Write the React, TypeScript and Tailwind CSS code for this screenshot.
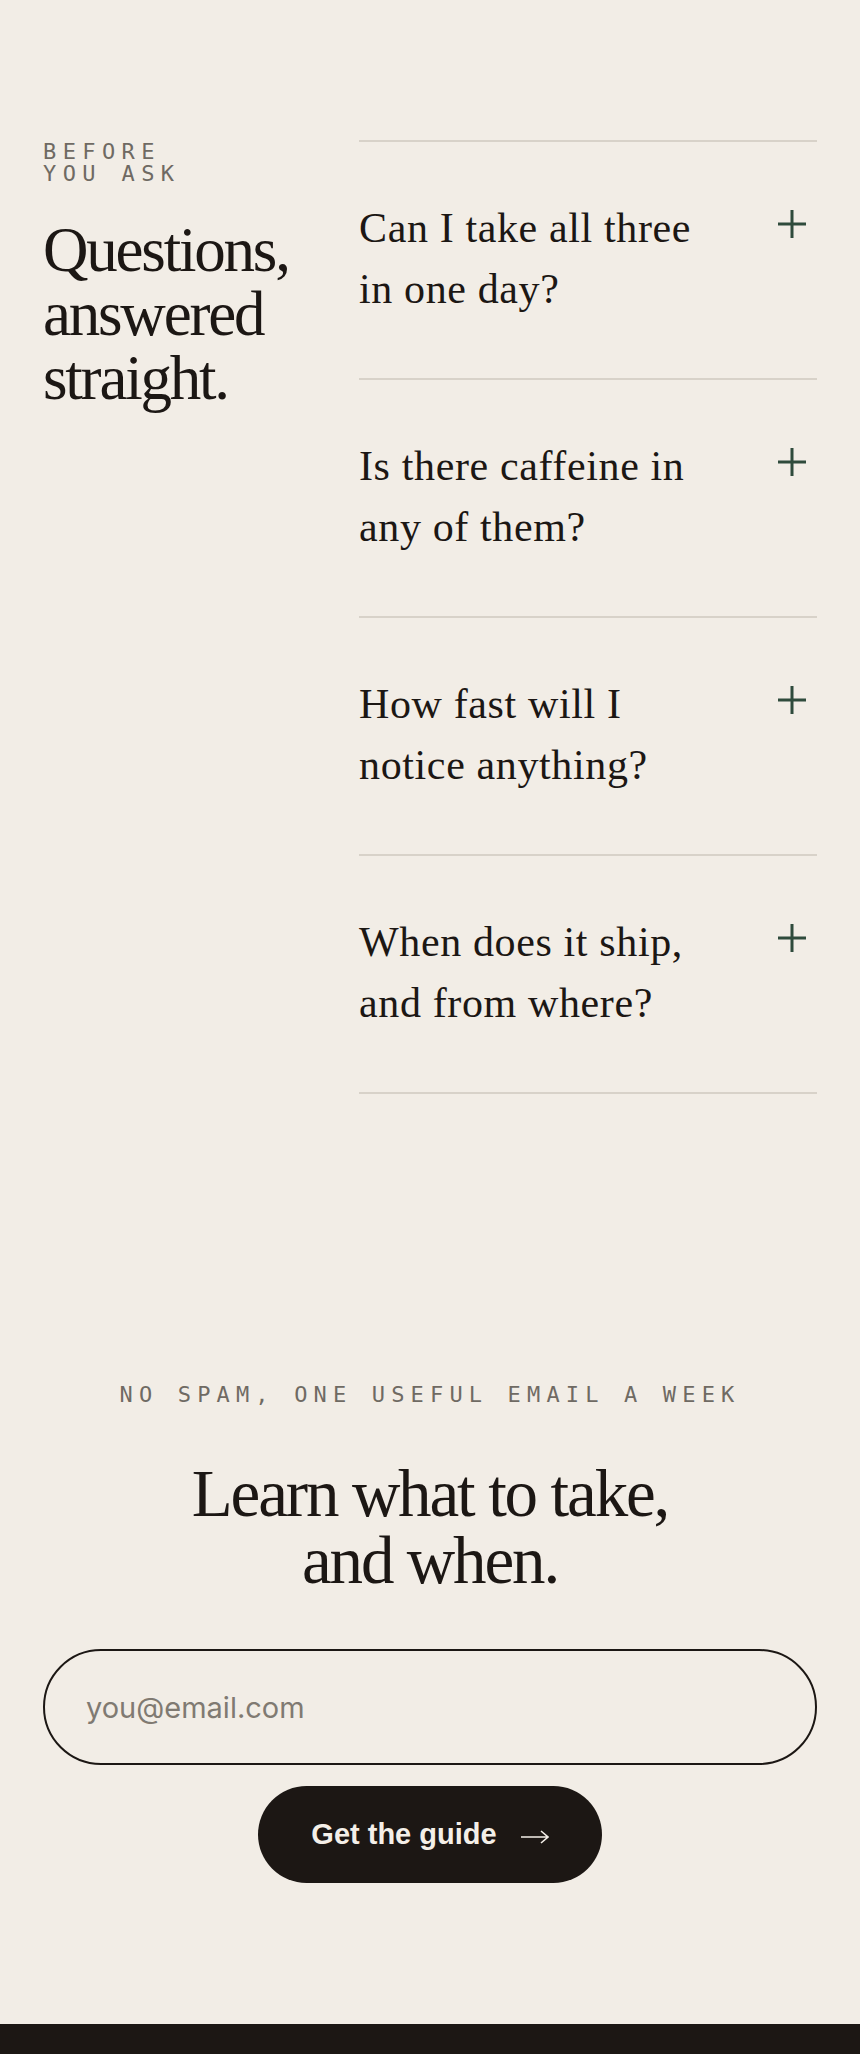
import React from 'react';

const faqs = [
  ['Can I take all three', 'in one day?'],
  ['Is there caffeine in', 'any of them?'],
  ['How fast will I', 'notice anything?'],
  ['When does it ship,', 'and from where?'],
];

function PlusIcon() {
  return (
    <svg width="28" height="28" viewBox="0 0 28 28" className="shrink-0 text-[#2f4b3c]">
      <path d="M0 14H28M14 0V28" stroke="currentColor" strokeWidth="3" fill="none" />
    </svg>
  );
}

function FaqItem({ lines }: { lines: string[] }) {
  return (
    <div className="flex items-start justify-between border-t-2 border-[#d8d2c9] pt-[56px] pb-[58px]">
      <h3 className="font-['Liberation_Serif',serif] text-[42px] leading-[61px] tracking-[0.015em] text-[#1c1714]">
        {lines[0]}
        <br />
        {lines[1]}
      </h3>
      <div className="mt-[12px] mr-[11px]">
        <PlusIcon />
      </div>
    </div>
  );
}

export default function App() {
  return (
    <div className="min-h-screen bg-[#f2ede6] flex flex-col">
      <section className="flex px-[43px] pt-[140px]">
        <div className="w-[316px] shrink-0">
          <p className="font-['DejaVu_Sans_Mono',monospace] text-[22px] leading-[22px] tracking-[0.29em] text-[#6f6a63] pt-px">
            BEFORE
            <br />
            YOU ASK
          </p>
          <h2 className="mt-[33px] font-['Liberation_Serif',serif] text-[63px] leading-[64px] tracking-[-0.035em] text-[#1c1714]">
            Questions,
            <br />
            answered
            <br />
            straight.
          </h2>
        </div>
        <div className="flex-1 border-b-2 border-[#d8d2c9]">
          {faqs.map((q) => (
            <FaqItem key={q[0]} lines={q} />
          ))}
        </div>
      </section>

      <section className="flex flex-col items-center px-[43px] pt-[290px]">
        <p className="font-['DejaVu_Sans_Mono',monospace] text-[22px] leading-[22px] tracking-[0.28em] text-[#6f6a63]">
          NO SPAM, ONE USEFUL EMAIL A WEEK
        </p>
        <h2 className="mt-[54px] text-center font-['Liberation_Serif',serif] text-[67px] leading-[67px] tracking-[-0.032em] text-[#1c1714]">
          Learn what to take,
          <br />
          and when.
        </h2>
        <input
          type="email"
          placeholder="you@email.com"
          className="mt-[55px] w-full h-[116px] rounded-full border-2 border-[#1c1714] bg-transparent pl-[41px] pr-[41px] font-['Inter',sans-serif] text-[29px] text-[#1c1714] placeholder:text-[#807a72] outline-none"
        />
        <button className="mt-[21px] w-[344px] h-[97px] rounded-full bg-[#1c1714] flex items-center justify-center gap-[24px] text-[#f4efe8]">
          <span className="font-['Liberation_Sans',sans-serif] font-bold text-[29px]">Get the guide</span>
          <svg width="28" height="14" viewBox="0 0 28 14" className="mt-[4px]">
            <path d="M0 7H27M20 1L27 7L20 13" stroke="currentColor" strokeWidth="1.6" fill="none" />
          </svg>
        </button>
      </section>

      <footer className="mt-[141px] h-[30px] bg-[#1c1714]" />
    </div>
  );
}
